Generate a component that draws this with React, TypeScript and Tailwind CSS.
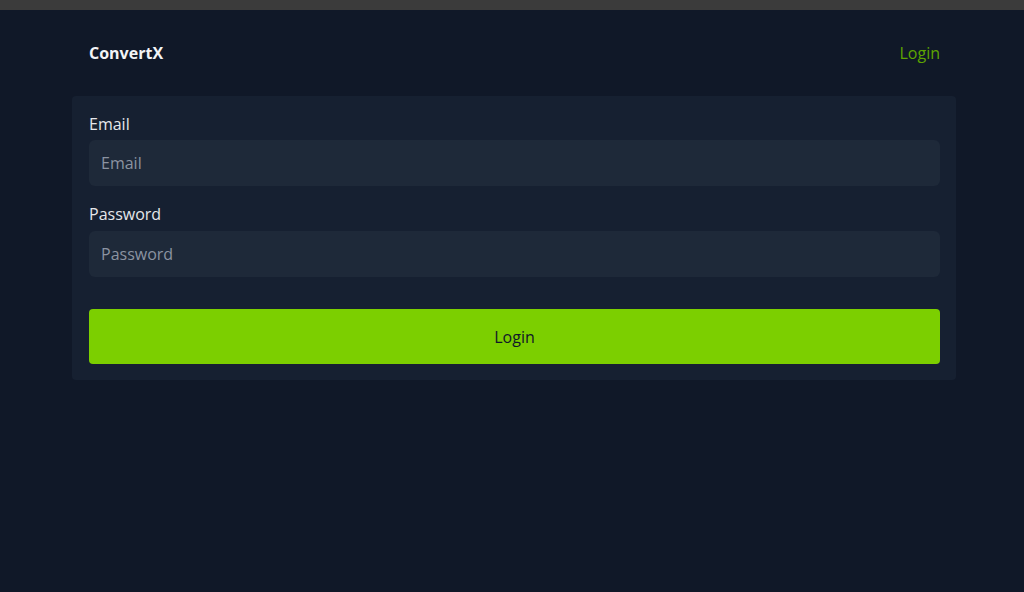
import { useState } from "react";

const App = () => {
  const [email, setEmail] = useState("");
  const [password, setPassword] = useState("");

  return (
    <div
      className="min-h-screen bg-[#101828] text-gray-100"
      style={{ fontFamily: '"Open Sans", "Noto Sans", sans-serif' }}
    >
      {/* window strip */}
      <div className="h-[10px] bg-[#3b3b3b]" />

      <div className="w-[884px] ml-[72px]">
        {/* Header */}
        <header className="flex items-center justify-between pl-[17px] pr-4 h-[86px]">
          <a href="#" className="text-base font-bold text-gray-100">
            ConvertX
          </a>
          <a href="#" className="text-base text-[#5ea500]">
            Login
          </a>
        </header>

        {/* Form */}
        <main className="bg-[#162031] rounded-sm pl-[17px] pr-4 pt-4 pb-4">
          <form
            onSubmit={(e) => e.preventDefault()}
            className="flex flex-col"
          >
            <label className="text-base text-gray-200 leading-6 mb-1">Email</label>
            <input
              type="email"
              value={email}
              onChange={(e) => setEmail(e.target.value)}
              placeholder="Email"
              className="h-[46px] w-full rounded-md bg-[#1e2939] px-3 text-base text-gray-100 placeholder:text-[#8b93a1] outline-none"
            />
            <label className="text-base text-gray-200 leading-6 mt-4 mb-[5px]">Password</label>
            <input
              type="password"
              value={password}
              onChange={(e) => setPassword(e.target.value)}
              placeholder="Password"
              className="h-[46px] w-full rounded-md bg-[#1e2939] px-3 text-base text-gray-100 placeholder:text-[#8b93a1] outline-none"
            />
            <button
              type="submit"
              className="mt-8 h-[55px] w-full rounded bg-[#7ccf00] text-base text-[#101828] hover:bg-[#6ab500] transition"
            >
              Login
            </button>
          </form>
        </main>
      </div>
    </div>
  );
};

export default App;
